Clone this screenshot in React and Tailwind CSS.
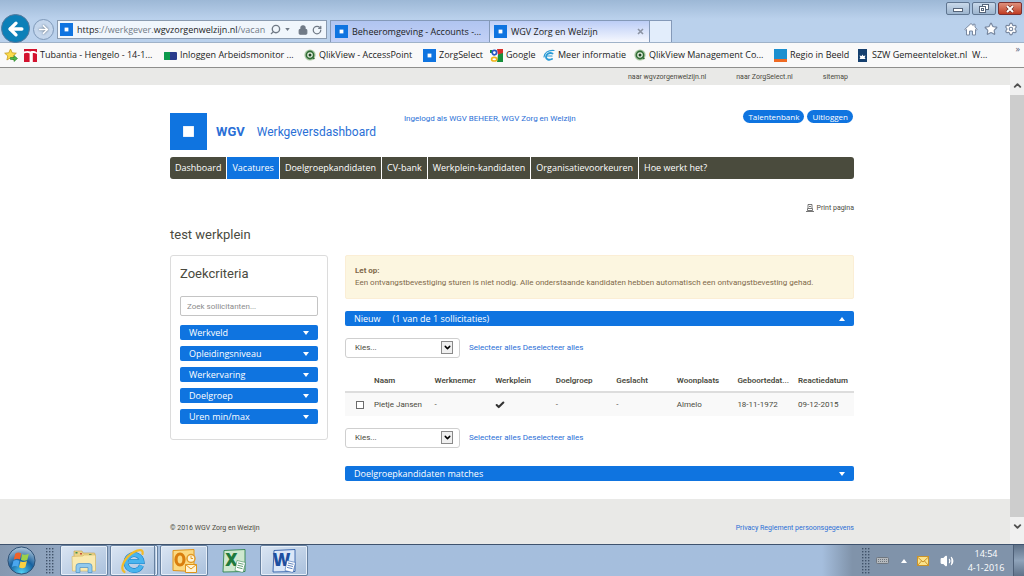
import { ArrowLeft, ArrowRight, Check, ChevronDown, ChevronUp, Lock, RotateCw, Search, Settings, Star, Volume2 } from 'lucide-react'

const navItems = ['Dashboard', 'Vacatures', 'Doelgroepkandidaten', 'CV-bank', 'Werkplein-kandidaten', 'Organisatievoorkeuren', 'Hoe werkt het?']
const filters = ['Werkveld', 'Opleidingsniveau', 'Werkervaring', 'Doelgroep', 'Uren min/max']
const columns = ['Naam', 'Werknemer', 'Werkplein', 'Doelgroep', 'Geslacht', 'Woonplaats', 'Geboortedat...', 'Reactiedatum']

const bookmarks = [
  { label: 'Tubantia - Hengelo - 14-1...', width: 'w-[140px]', icon: TubantiaIcon },
  { label: 'Inloggen Arbeidsmonitor ...', width: 'w-[140px]', icon: MonitorIcon },
  { label: 'QlikView - AccessPoint', width: 'w-[119px]', icon: QlikIcon },
  { label: 'ZorgSelect', width: 'w-[67px]', icon: WgvIcon },
  { label: 'Google', width: 'w-[53px]', icon: GoogleIcon },
  { label: 'Meer informatie', width: 'w-[91px]', icon: InfoIcon },
  { label: 'QlikView Management Co...', width: 'w-[140px]', icon: QlikIcon },
  { label: 'Regio in Beeld', width: 'w-[82px]', icon: RegioIcon },
  { label: 'SZW Gemeenteloket.nl  W...', width: 'w-[140px]', icon: SzwIcon },
]

function WgvIcon({ className = 'size-[13px]' }) {
  return (
    <svg viewBox="0 0 13 13" className={`shrink-0 ${className}`}>
      <rect width="13" height="13" fill="#0f74e0" />
      <rect x="4.6" y="4.6" width="3.8" height="3.8" fill="#fff" />
    </svg>
  )
}

function TubantiaIcon() {
  return (
    <svg viewBox="0 0 13 13" className="size-[13px] shrink-0">
      <rect width="13" height="13" fill="#d3122e" />
      <path d="M0 2.500c2-.8 5-.8 6.500 0 2-.8 4.500-.4 6.500 1v1.500c-1.500-1-3-1.300-4.200-1V13H5.600V4.400C4 3.600 2 3.700 0 4.500z" fill="#fff" />
      <path d="M0 6.500h3V13H0z" fill="#d3122e" />
    </svg>
  )
}

function MonitorIcon() {
  return (
    <svg viewBox="0 0 13 13" className="size-[13px] shrink-0">
      <rect y="3" width="13" height="8" rx="1" fill="#283a8c" />
      <path d="M1 3h5v8H1a1 1 0 0 1-1-1V4a1 1 0 0 1 1-1z" fill="#0c9a4c" />
    </svg>
  )
}

function QlikIcon() {
  return (
    <svg viewBox="0 0 12 12" className="size-[12px] shrink-0">
      <circle cx="6" cy="6" r="5.6" fill="#a9c8a2" />
      <circle cx="6" cy="6" r="3.6" fill="#e8f2e2" stroke="#2f6b35" strokeWidth="1.6" />
      <circle cx="6" cy="6" r="1.5" fill="#1d4424" />
      <path d="M8 8l2.4 2" stroke="#2f6b35" strokeWidth="1.6" />
    </svg>
  )
}

function GoogleIcon() {
  return (
    <svg viewBox="0 0 13 13" className="size-[13px] shrink-0">
      <path d="M7 0h6v5L8 6z" fill="#d8302b" />
      <path d="M8 5.5L13 4v9H7z" fill="#17903b" />
      <path d="M0 1h2v3H0z" fill="#17903b" />
      <circle cx="4.4" cy="3.6" r="2.2" fill="#fff" stroke="#2557c4" strokeWidth="1.7" />
      <ellipse cx="4.2" cy="10.2" rx="2.6" ry="1.8" fill="#fff" stroke="#f0b51c" strokeWidth="1.6" />
    </svg>
  )
}

function InfoIcon() {
  return (
    <svg viewBox="0 0 12 12" className="size-[12px] shrink-0" fill="none" stroke="#2b9bd6" strokeLinecap="round">
      <path d="M11 1.5C5 1 1.5 4 1 8" strokeWidth="1.2" />
      <path d="M9.5 4.5C6 3 3 5.5 3 8s3 3.5 6 2" strokeWidth="1.9" />
      <path d="M4 7h5" strokeWidth="1.2" />
    </svg>
  )
}

function RegioIcon() {
  return (
    <svg viewBox="0 0 13 13" className="size-[13px] shrink-0">
      <rect width="13" height="13" fill="#1b8fd0" />
      <rect y="10" width="13" height="3" fill="#ef6a23" />
    </svg>
  )
}

function SzwIcon() {
  return (
    <svg viewBox="0 0 13 13" className="size-[13px] shrink-0">
      <rect x="2" width="9" height="13" fill="#16406f" />
      <path d="M6.500 5.500l.8 1.500 2.200-.5-.8 2 .8 1.500h-6l.8-1.500-.8-2 2.200.5z" fill="#fff" />
    </svg>
  )
}

function AddFavoriteIcon() {
  return (
    <svg viewBox="0 0 14 14" className="size-[14px] shrink-0">
      <path d="M6.5 1l1.7 3.8 4.1.4-3.1 2.7.9 4.1-3.6-2.1L2.9 12l.9-4.1L.7 5.200l4.1-.4z" fill="#fbdc4c" stroke="#c79a1c" strokeWidth=".8" />
      <path d="M6.5 9.5H10v-2l3.5 3-3.5 3v-2H6.5z" fill="#4db848" stroke="#23812a" strokeWidth=".6" />
    </svg>
  )
}

function HomeIcon() {
  return (
    <svg viewBox="0 0 14 14" className="size-[14px]" fill="#fff" stroke="#7888a0" strokeLinejoin="round">
      <path d="M7 1.500l2.200 2V2.200h1.800v3l2.200 2.100-.8.900-.9-.8V13H8.500V9h-3v4h-3V7.400l-.9.8-.8-.9z" />
    </svg>
  )
}

function EnvelopeIcon() {
  return (
    <svg viewBox="0 0 12 10" className="h-[10px] w-3">
      <rect x=".5" y=".5" width="11" height="9" fill="#fbe38c" stroke="#c9922a" />
      <path d="M.5 1L6 6l5.500-5M.5 9.500L4.500 5M11.500 9.500L7.500 5" fill="none" stroke="#c9922a" />
    </svg>
  )
}

function Caret({ up = false, className = 'h-[4px] w-[6px]' }) {
  return (
    <svg viewBox="0 0 6 4" className={`shrink-0 ${className}`} fill="currentColor">
      <path d={up ? 'M0 4L3 0l3 4z' : 'M0 0h6L3 4z'} />
    </svg>
  )
}

function WindowButtons() {
  const base = 'flex h-[13px] w-6 items-center justify-center rounded-[2px] border'
  return (
    <div className="flex gap-[2px] pt-[2px]">
      <button aria-label="Minimaliseren" className={`${base} border-[#5f7590] bg-linear-to-b from-[#c9d9ea] to-[#9db5cf]`}>
        <svg viewBox="0 0 10 8" className="h-2 w-[10px]"><rect x=".5" y="3.5" width="9" height="3" fill="#fff" stroke="#56657a" /></svg>
      </button>
      <button aria-label="Verkleinen" className={`${base} border-[#5f7590] bg-linear-to-b from-[#c9d9ea] to-[#9db5cf]`}>
        <svg viewBox="0 0 10 9" className="h-[9px] w-[10px]" fill="#fff" stroke="#56657a">
          <rect x="3.5" y=".5" width="6" height="5" />
          <rect x=".5" y="2.5" width="6" height="6" />
          <rect x="2.5" y="4.5" width="2" height="2" />
        </svg>
      </button>
      <button aria-label="Sluiten" className={`${base} border-[#7a3030] bg-linear-to-b from-[#dd8f7c] to-[#c03a20]`}>
        <svg viewBox="0 0 10 8" className="h-2 w-[10px]">
          <path d="M2 1l6 6M8 1L2 7" stroke="#6c2a22" strokeWidth="3.2" />
          <path d="M2 1l6 6M8 1L2 7" stroke="#fff" strokeWidth="2" />
        </svg>
      </button>
    </div>
  )
}

function BrowserChrome() {
  return (
    <header className="shrink-0 font-['Open_Sans',sans-serif] text-[9px] text-[#1c1c1c]">
      <div className="flex h-[43px] items-end border-b border-[#9fb2c8] bg-linear-to-b from-[#9db8d6] to-[#bad1ec] to-45%">
        <button aria-label="Vorige" className="-mb-px ml-[1px] flex size-[29px] shrink-0 items-center justify-center rounded-full border border-[#56789b] bg-[#0c80b8] text-white">
          <ArrowLeft size={20} strokeWidth={4} />
        </button>
        <button aria-label="Volgende" className="mb-[2px] ml-[3px] flex size-[21px] shrink-0 items-center justify-center rounded-full border border-[#7e98b8] bg-[#c4d6ec] text-white">
          <ArrowRight size={13} strokeWidth={3} className="drop-shadow-[0_0_1px_#567]" />
        </button>
        <div className="mb-[3px] ml-[3px] flex h-[19px] w-[270px] items-center border border-[#8a9bb0] bg-[#f0f6fc] pr-1 pl-[2px] text-[#707a86]">
          <WgvIcon />
          <div className="ml-1 flex-1 whitespace-nowrap">
            <span className="text-[#1c1c1c]">https</span>://werkgever.<span className="text-[#1c1c1c]">wgvzorgenwelzijn.nl</span>/vacan
          </div>
          <Search size={11} strokeWidth={3} className="-scale-x-100" />
          <Caret className="mx-1 h-[3px] w-[5px]" />
          <Lock size={10} strokeWidth={3} fill="currentColor" className="mx-1" />
          <RotateCw size={10} strokeWidth={3} />
        </div>
        <a href="#accounts" className="ml-[3px] flex h-[22px] w-[160px] items-center gap-1 border border-b-0 border-[#8499b8] bg-linear-to-b from-[#b0c4f0] to-[#c3d1f6] pl-1 whitespace-nowrap">
          <WgvIcon />
          Beheeromgeving - Accounts -...
        </a>
        <a href="#zorg" className="flex h-[22px] w-[160px] items-center gap-1 border border-b-0 border-l-0 border-[#8499b8] bg-linear-to-b from-[#bccdf6] to-[#f6f8fe] pr-[5px] pl-1 whitespace-nowrap">
          <WgvIcon />
          <span className="flex-1">WGV Zorg en Welzijn</span>
          <svg viewBox="0 0 7 7" className="size-[7px]"><path d="M1 1l5 5M6 1L1 6" stroke="#8b93a3" strokeWidth="1.6" /></svg>
        </a>
        <button aria-label="Nieuw tabblad" className="h-[22px] w-[22px] border border-b-0 border-l-0 border-[#8499b8] bg-[#e2edfb]" />
        <div className="ml-auto flex h-full flex-col items-end justify-between pr-[2px] pb-[6px]">
          <WindowButtons />
          <div className="flex gap-[6px] pr-1 text-[#7888a0]">
            <HomeIcon />
            <Star size={14} fill="#fff" />
            <Settings size={14} fill="#fff" />
          </div>
        </div>
      </div>
      <nav className="flex h-[25px] items-center border-b border-[#8e8e8c] bg-[#f9f9f9] pl-[4px]">
        <AddFavoriteIcon />
        <div className="ml-[6px] flex min-w-0 flex-1">
          {bookmarks.map(({ label, width, icon: Icon }) => (
            <a key={label} href="#favoriet" className={`flex shrink-0 items-center gap-[3px] whitespace-pre ${width}`}>
              <Icon />
              {label}
            </a>
          ))}
        </div>
        <span className="self-start pr-1 leading-3 text-[#555f7a]">»</span>
      </nav>
    </header>
  )
}

function BulkActions() {
  return (
    <div className="flex h-5 items-center">
      <div className="relative w-[115px]">
        <select aria-label="Actie" className="block h-5 w-full appearance-none rounded-[3px] border border-[#cfcfcf] bg-white pl-[9px] text-[8px] leading-3">
          <option>Kies...</option>
        </select>
        <span className="pointer-events-none absolute top-[3px] right-[7px] flex h-[13px] w-[12px] items-center justify-center border border-[#8a8a8a] bg-[#f0f0f0] text-black">
          <ChevronDown size={9} strokeWidth={4} />
        </span>
      </div>
      <span className="ml-[9px] flex gap-[2px] text-[#2a6fd6]">
        <a href="#selecteer">Selecteer alles</a>
        <a href="#deselecteer">Deselecteer alles</a>
      </span>
    </div>
  )
}

function SectionBar({ children, open = false }) {
  return (
    <button aria-expanded={open} className="flex h-[15px] w-full items-center justify-between rounded-[2px] bg-[#0f74e0] px-[9px] font-['Open_Sans',sans-serif] text-[9px] font-medium text-white">
      <span className="flex gap-3">{children}</span>
      <Caret up={open} />
    </button>
  )
}

function Sidebar() {
  return (
    <aside className="self-start rounded-[3px] border border-[#dcdcdc] px-[9px] pb-[15px]">
      <h2 className="pt-[10px] text-[13px] leading-4">Zoekcriteria</h2>
      <input
        aria-label="Zoek sollicitanten"
        placeholder="Zoek sollicitanten..."
        className="mt-[14px] block h-5 w-full rounded-[2px] border border-[#c4c4c4] px-[6px] text-[8px] placeholder:text-[#8c8c8c]"
      />
      <div className="mt-[9px] flex flex-col gap-[6px]">
        {filters.map(f => (
          <SectionBar key={f}>{f}</SectionBar>
        ))}
      </div>
    </aside>
  )
}

function ApplicantTable() {
  return (
    <table className="mt-3 w-full table-fixed text-left">
      <colgroup>
        <col className="w-[29px]" />
        {columns.map((c, i) => <col key={c} className={i === 7 ? 'w-[56px]' : ''} />)}
      </colgroup>
      <thead>
        <tr className="h-[22px] border-b-2 border-[#dddddd]">
          <td />
          {columns.map(c => <th key={c} scope="col" className="font-semibold whitespace-nowrap">{c}</th>)}
        </tr>
      </thead>
      <tbody>
        <tr className="h-6 bg-[#f9f9f9]">
          <td className="pl-[11px]">
            <input type="checkbox" aria-label="Pietje Jansen" className="block size-2 appearance-none border border-[#6c6c6c] bg-white" />
          </td>
          <td className="whitespace-nowrap">Pietje Jansen</td>
          <td>-</td>
          <td><Check size={10} strokeWidth={5} aria-label="Ja" className="text-[#333]" /></td>
          <td>-</td>
          <td>-</td>
          <td>Almelo</td>
          <td>18-11-1972</td>
          <td>09-12-2015</td>
        </tr>
      </tbody>
    </table>
  )
}

function Page() {
  return (
    <div className="relative flex min-h-0 flex-1 flex-col bg-white font-['Roboto',sans-serif] text-[8px] leading-3 text-[#4a4a40]">
      <div className="bg-[#e9e9e7]">
        <div className="mx-auto flex h-[17px] max-w-[684px] items-center justify-end gap-[30px] pr-[6px] text-[7px]">
          <a href="#wgv">naar wgvzorgenwelzijn.nl</a>
          <a href="#zorgselect">naar ZorgSelect.nl</a>
          <a href="#sitemap">sitemap</a>
        </div>
      </div>

      <div className="mx-auto w-full max-w-[684px] flex-1">
        <div className="flex items-start pt-[25px]">
          <div className="flex items-center pt-[3px] text-[#2a6fd6]">
            <WgvIcon className="size-[37px]" />
            <span className="ml-[9px] text-[13px] leading-4 font-bold">WGV</span>
            <span className="ml-3 text-[12px] leading-4">Werkgeversdashboard</span>
          </div>
          <span className="mt-[3px] ml-[28px] text-[#2a6fd6]">Ingelogd als WGV BEHEER, WGV Zorg en Welzijn</span>
          <div className="ml-auto flex gap-[3px] pr-[1px] font-['Open_Sans',sans-serif] text-white">
            <a href="#talentenbank" className="rounded-full bg-[#0f74e0] px-[5px] leading-[13px]">Talentenbank</a>
            <a href="#uitloggen" className="rounded-full bg-[#0f74e0] px-[5px] leading-[13px]">Uitloggen</a>
          </div>
        </div>

        <nav className="mt-[7px] flex h-[22px] overflow-hidden rounded-[3px] bg-[#4a4b3d] font-['Open_Sans',sans-serif] text-[9px] font-medium text-white">
          {navItems.map(item => (
            <a
              key={item}
              href="#menu"
              className={`flex items-center border-r border-white px-[5px] whitespace-nowrap last:border-0 ${item === 'Vacatures' ? 'bg-[#0f74e0]' : ''}`}
            >
              {item}
            </a>
          ))}
        </nav>

        <a href="#print" className="mt-[23px] flex items-center justify-end gap-[3px] text-[7px]">
          <svg viewBox="0 0 8 8" className="size-2" fill="none" stroke="#555">
            <path d="M2 4V.5h4V4M1.500 4.500h5v2h-5zM0 7.500h8M3 2.500h2" strokeWidth=".8" />
          </svg>
          Print pagina
        </a>

        <h1 className="mt-[13px] text-[13px] leading-4">test werkplein</h1>

        <div className="mt-[12px] grid grid-cols-[158px_1fr] gap-[17px]">
          <Sidebar />
          <main>
            <div className="rounded-[2px] border border-[#fbeed5] bg-[#fcf6e0] p-[9px] text-[#80694a]">
              <strong className="block">Let op:</strong>
              Een ontvangstbevestiging sturen is niet nodig. Alle onderstaande kandidaten hebben automatisch een ontvangstbevesting gehad.
            </div>
            <div className="mt-3">
              <SectionBar open>
                <span>Nieuw</span>
                <span>(1 van de 1 sollicitaties)</span>
              </SectionBar>
            </div>
            <div className="mt-3"><BulkActions /></div>
            <ApplicantTable />
            <div className="mt-3"><BulkActions /></div>
            <div className="mt-[18px]"><SectionBar>Doelgroepkandidaten matches</SectionBar></div>
          </main>
        </div>
      </div>

      <footer className="bg-[#e9e9e7]">
        <div className="mx-auto flex h-[45px] max-w-[684px] items-center justify-between pt-3 text-[7px]">
          <span>© 2016 WGV Zorg en Welzijn</span>
          <a href="#privacy" className="text-[#2a6fd6]">Privacy Reglement persoonsgegevens</a>
        </div>
      </footer>

      <div className="absolute inset-y-0 right-0 flex w-[14px] flex-col items-center justify-between bg-[#f0f0f0] py-3 text-[#505050]">
        <ChevronUp size={11} strokeWidth={4} />
        <div className="my-1 w-full flex-1 bg-[#cdcdcd]" />
        <ChevronDown size={11} strokeWidth={4} />
      </div>
    </div>
  )
}

function StartOrb() {
  return (
    <svg viewBox="0 0 30 30" className="size-[29px]">
      <defs>
        <radialGradient id="orb" cx=".5" cy=".95" r=".95">
          <stop offset="0" stopColor="#4fd0f5" />
          <stop offset=".5" stopColor="#17619f" />
          <stop offset="1" stopColor="#b4c8da" />
        </radialGradient>
      </defs>
      <circle cx="15" cy="15" r="14" fill="url(#orb)" stroke="#2c4f74" />
      <path d="M8.500 8c2.200-1.500 4.200-1.500 6.300-.3L13.300 14c-2-1-4.200-1-6.300.3z" fill="#f0632a" />
      <path d="M15.800 8.200c2 1.200 4.200 1.200 6.800-.2L21 14.500c-2.200 1.300-4.500 1-6.600-.2z" fill="#9bd04a" />
      <path d="M6.600 15.500c2.100-1.300 4.200-1.300 6.300-.3L11.400 21.500c-2-1.200-4.200-1.100-6.300.2z" fill="#4aa6ee" />
      <path d="M14 15.700c2.100 1.200 4.300 1.200 6.600-.1L19 22c-2.200 1.300-4.400 1.100-6.500-.1z" fill="#fbd042" />
    </svg>
  )
}

function ExplorerIcon() {
  return (
    <svg viewBox="0 0 26 24" className="h-6 w-[26px]">
      <path d="M3 2h8l1 2h11a1 1 0 0 1 1 1v16H3z" fill="#ecd48a" stroke="#c2a04c" strokeWidth=".6" />
      <path d="M4.500 3h2v1.500h-2z" fill="#3f8f4a" />
      <path d="M9 4h2v1.500H9z" fill="#c4533b" />
      <path d="M18 5h2.500v1.500H18z" fill="#3f8f4a" />
      <path d="M1 7.500l11-.5 1-1h11.500v16H1.500z" fill="#f9eab0" stroke="#d3b560" strokeWidth=".6" />
      <path d="M5 23.500v-6a3 3 0 0 1 3-3h10a3 3 0 0 1 3 3v6h-4v-5H9v5z" fill="#8fc9ee" stroke="#4b8fc4" strokeWidth=".7" />
    </svg>
  )
}

function IeIcon() {
  return (
    <svg viewBox="0 0 26 26" className="size-[26px]" fill="none">
      <path d="M21.500 17.500A8 8 0 1 1 22 13.500H9" stroke="#1d7fc4" strokeWidth="5" />
      <path d="M21.500 17.500A8 8 0 1 1 22 13.500H9" stroke="#48b4ee" strokeWidth="3.800" />
      <path d="M4.500 24C-1 20.500 5 9 14 4c5.500-3 9.500-2.500 8.500 2" stroke="#f2bb2a" strokeWidth="2.200" strokeLinecap="round" />
    </svg>
  )
}

function OfficeIcon({ letter, color, tint }) {
  return (
    <svg viewBox="0 0 26 26" className="size-[26px]">
      <path d="M3 2.500l21-1v22L2 24z" fill={tint} stroke={color} strokeWidth=".8" />
      <text x="10.5" y="18" textAnchor="middle" fontSize="17" fontWeight="800" fontFamily="Open Sans, sans-serif" fill={color}>{letter}</text>
      <path d="M16 12.500l8.500 2-2.500 10-8-2z" fill="#fff" stroke={color} strokeWidth=".5" />
      <path d="M17 15l5.500 1.300M16.500 17.200l5.500 1.300M16 19.400l5.500 1.300" stroke={color} strokeWidth=".7" />
    </svg>
  )
}

function OutlookIcon() {
  return (
    <svg viewBox="0 0 26 26" className="size-[26px]">
      <path d="M2 2.500l21-1v22L2 22.500z" fill="#fbd981" stroke="#df941b" />
      <ellipse cx="9" cy="11.5" rx="4" ry="5.5" fill="none" stroke="#d97e0e" strokeWidth="3.2" />
      <circle cx="20" cy="10.500" r="4" fill="#fff3d3" stroke="#e29a28" strokeWidth="1.5" />
      <path d="M20 8v2.500h2" fill="none" stroke="#e29a28" />
      <path d="M14.500 16.500h11v8h-11z" fill="#fff3d3" stroke="#df941b" />
      <path d="M14.500 16.500l5.500 4.500 5.500-4.500" fill="none" stroke="#df941b" />
    </svg>
  )
}

function TaskButton({ label, active = true, stacked = false, children }) {
  return (
    <button
      aria-label={label}
      className={`flex h-[31px] w-[48px] rounded-[2px] ${active ? 'border border-[#66809f] bg-linear-to-br from-[#dbe6f3] to-[#a9c0dc] shadow-[inset_0_0_0_1px_#e6eef8]' : ''}`}
    >
      <span className={`flex h-full flex-1 items-center justify-center ${stacked ? 'mr-[2px] border-r border-[#66809f]' : ''}`}>
        {children}
      </span>
    </button>
  )
}

function Grip() {
  return (
    <svg viewBox="0 0 8 26" className="h-[26px] w-2" fill="#41536a">
      {[0, 1, 2, 3, 4, 5, 6, 7, 8].map(r => [0, 1, 2].map(c => (
        <rect key={`${r}-${c}`} x={c * 3} y={r * 3} width="1.4" height="1.4" />
      )))}
    </svg>
  )
}

function Taskbar() {
  return (
    <footer className="flex h-8 shrink-0 items-center border-t border-[#3f536e] bg-linear-to-r from-[#8598b0] from-0% via-[#a5bedd] via-15% to-[#a5bedd] font-['Open_Sans',sans-serif] text-[9px] text-white">
      <button aria-label="Start" className="ml-[7px]"><StartOrb /></button>
      <div className="ml-[10px]"><Grip /></div>
      <div className="ml-[6px] flex gap-[2px]">
        <TaskButton label="Verkenner"><ExplorerIcon /></TaskButton>
        <TaskButton label="Internet Explorer" stacked><IeIcon /></TaskButton>
        <TaskButton label="Outlook"><OutlookIcon /></TaskButton>
        <TaskButton label="Excel" active={false}><OfficeIcon letter="X" color="#1f7a3c" tint="#cfe8cf" /></TaskButton>
        <TaskButton label="Word"><OfficeIcon letter="W" color="#1d4fa0" tint="#dbe7f8" /></TaskButton>
      </div>
      <div className="ml-auto flex h-full items-center bg-linear-to-r from-[#a5bedd] to-[#8093aa] to-15% pl-[40px]">
        <Grip />
        <svg viewBox="0 0 13 9" className="ml-[6px] h-[9px] w-[13px]">
          <rect x=".5" y="1.5" width="12" height="6" rx="1" fill="#b5b9bd" stroke="#6f7780" />
          <path d="M2 3.500h9M2 5.500h9" stroke="#6f7780" strokeDasharray="1 1" />
        </svg>
        <span className="mr-[10px] ml-3"><Caret up /></span>
        <EnvelopeIcon />
        <Volume2 size={14} fill="#fff" className="ml-[11px]" />
        <div className="ml-3 w-[40px] text-center leading-[14px] whitespace-nowrap">
          <div>14:54</div>
          <div>4-1-2016</div>
        </div>
        <button aria-label="Bureaublad weergeven" className="ml-[7px] h-full w-[11px] border-l border-[#4d5f77] bg-linear-to-b from-[#5f7289] via-[#8fa3ba] to-[#5f7289]" />
      </div>
    </footer>
  )
}

export default function App() {
  return (
    <div className="flex h-screen flex-col overflow-hidden">
      <BrowserChrome />
      <Page />
      <Taskbar />
    </div>
  )
}
